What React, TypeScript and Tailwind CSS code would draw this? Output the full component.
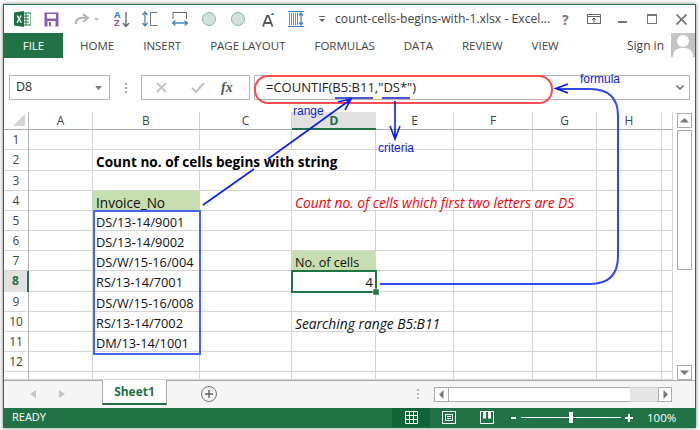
import React from 'react';

const sans = "font-['Open_Sans',sans-serif]";

type Cell = { col: number; span?: number; text: string; className?: string };

const columns = ['A', 'B', 'C', 'D', 'E', 'F', 'G', 'H', ''];

const rows: { n: string; cells: Cell[] }[] = [
  { n: '1', cells: [] },
  { n: '2', cells: [{ col: 1, span: 3, text: 'Count no. of cells begins with string', className: 'text-[13.6px] font-bold text-black' }] },
  { n: '3', cells: [] },
  {
    n: '4',
    cells: [
      { col: 1, text: 'Invoice_No', className: 'text-[13.6px] bg-[#c6deb0]' },
      { col: 3, span: 4, text: 'Count no. of cells which first two letters are DS', className: 'text-[13.7px] italic text-[#ff0000]' },
    ],
  },
  { n: '5', cells: [{ col: 1, text: 'DS/13-14/9001', className: 'text-[12.8px]' }] },
  { n: '6', cells: [{ col: 1, text: 'DS/13-14/9002', className: 'text-[12.8px]' }] },
  {
    n: '7',
    cells: [
      { col: 1, text: 'DS/W/15-16/004', className: 'text-[12.8px]' },
      { col: 3, text: 'No. of cells', className: 'text-[12.6px] bg-[#c6deb0]' },
    ],
  },
  {
    n: '8',
    cells: [
      { col: 1, text: 'RS/13-14/7001', className: 'text-[12.8px]' },
      { col: 3, text: '4', className: 'text-[13px] text-right' },
    ],
  },
  { n: '9', cells: [{ col: 1, text: 'DS/W/15-16/008', className: 'text-[12.8px]' }] },
  {
    n: '10',
    cells: [
      { col: 1, text: 'RS/13-14/7002', className: 'text-[12.8px]' },
      { col: 3, span: 2, text: 'Searching range B5:B11', className: 'text-[13.8px] italic' },
    ],
  },
  { n: '11', cells: [{ col: 1, text: 'DM/13-14/1001', className: 'text-[12.8px]' }] },
  { n: '12', cells: [] },
  { n: '', cells: [] },
];

function SheetGrid() {
  return (
    <div className="grid grid-cols-[25px_64px_107px_92px_84px_78px_79px_64px_65px_11px] grid-rows-[18px_20px_21px_20px_20px_20px_20px_20px_21px_20px_20px_20px_20px_8px] w-[669px] h-[268px] overflow-hidden bg-white">
      <div className="border-r border-b border-r-[#b5b5b5] border-b-[#ababab] flex items-end justify-end p-[3px]">
        <div className="w-[12px] h-[12px] bg-[#d4d4d4] [clip-path:polygon(100%_0,100%_100%,0_100%)]" />
      </div>
      {columns.map((c, i) => (
        <div
          key={i}
          className={
            c === 'D'
              ? `bg-[#e1e1e1] border-b-2 border-[#217346] text-center text-[12.5px] leading-[17px] font-bold text-[#217346] ${sans}`
              : `border-r border-b border-r-[#d4d4d4] border-b-[#ababab] text-center text-[12px] leading-[17px] text-[#444] ${sans}`
          }
        >
          {c}
        </div>
      ))}
      {rows.map((row) => {
        const taken = new Set<number>();
        row.cells.forEach((cell) => {
          for (let k = 0; k < (cell.span ?? 1); k++) taken.add(cell.col + k);
        });
        return (
          <React.Fragment key={row.n || 'last'}>
            <div
              className={
                row.n === '8'
                  ? `bg-[#e1e1e1] border-r-2 border-[#217346] text-center text-[12px] leading-[20px] font-bold text-[#217346] ${sans}`
                  : `border-r border-b border-r-[#b5b5b5] border-b-[#d4d4d4] text-center text-[12px] leading-[20px] text-[#444] ${sans}`
              }
            >
              {row.n}
            </div>
            {columns.map((_, i) => {
              const cell = row.cells.find((x) => x.col === i);
              if (cell) {
                return (
                  <div
                    key={i}
                    style={{ gridColumn: `span ${cell.span ?? 1}` }}
                    className={`border-r border-b border-[#d4d4d4] pt-[1px] pl-[3px] pr-[2px] leading-[21px] whitespace-nowrap text-[#111] ${sans} ${cell.className ?? ''}`}
                  >
                    {cell.text}
                  </div>
                );
              }
              if (taken.has(i)) return null;
              return <div key={i} className="border-r border-b border-[#d4d4d4]" />;
            })}
          </React.Fragment>
        );
      })}
    </div>
  );
}

function QuickAccess() {
  return (
    <div className="h-[28px] flex items-center pl-[10px]">
      <svg width="17" height="16" viewBox="0 0 17 16">
        <rect x="6" y="2" width="11" height="12" fill="#fff" stroke="#217346" />
        <path d="M9 5h6M9 8h6M9 11h6M12 2v12" stroke="#217346" strokeWidth="1" />
        <path d="M0 1.500 10 0v16L0 14.500z" fill="#1d6f42" />
        <path d="M2.500 4.500h1.700L5.200 7l1-2.500h1.600L6 8l1.900 3.700H6.200L5.100 9.100 4 11.700H2.400L4.300 8z" fill="#fff" />
      </svg>
      <svg width="15" height="15" viewBox="0 0 15 15" className="ml-[13px]">
        <rect x="0.500" y="0.500" width="14" height="14" fill="#8a5bb0" />
        <rect x="3" y="2" width="9" height="4.500" fill="#fff" />
        <rect x="3.500" y="9" width="8" height="5.500" fill="#fff" />
        <rect x="5" y="10" width="2" height="4" fill="#8a5bb0" />
      </svg>
      <svg width="15" height="13" viewBox="0 0 15 13" className="ml-[15px]">
        <path d="M2 11C1 6 6 4 12 5" fill="none" stroke="#b5b5b5" strokeWidth="2.200" />
        <path d="M9 1l5 4-5 4" fill="none" stroke="#b5b5b5" strokeWidth="2" />
      </svg>
      <svg width="5" height="3" viewBox="0 0 5 3" className="ml-[5px]">
        <path d="M0 0h5L2.500 3z" fill="#bdbdbd" />
      </svg>
      <div className="ml-[15px] w-[16px] h-[17px] flex">
        <div className={`w-[8px] flex flex-col text-[9.5px] leading-[8.500px] font-bold ${sans}`}>
          <span className="text-[#3f7fbf]">A</span>
          <span className="text-[#8a5bb0]">Z</span>
        </div>
        <svg width="8" height="17" viewBox="0 0 8 17">
          <path d="M4 1v14M1 12l3 3.500 3-3.500" fill="none" stroke="#666" strokeWidth="1.300" />
        </svg>
      </div>
      <svg width="16" height="16" viewBox="0 0 16 16" className="ml-[12px]">
        <path d="M3 1v14M0.500 4 3 1l2.500 3M0.500 12 3 15l2.500-3" fill="none" stroke="#4a86c0" strokeWidth="1.300" />
        <path d="M15.500 1.500H8.500v13h7" fill="none" stroke="#777" strokeWidth="1" />
      </svg>
      <svg width="16" height="16" viewBox="0 0 16 16" className="ml-[14px]">
        <path d="M1 8V1.500h13.500V8" fill="none" stroke="#666" strokeWidth="1" />
        <path d="M0.500 12h15M3.500 9.500 0.500 12l3 2.500M12.500 9.500l3 2.500-3 2.500" fill="none" stroke="#4a86c0" strokeWidth="1.300" />
      </svg>
      <div className="ml-[14px] w-[14px] h-[14px] rounded-full bg-[#cfe2da] border border-[#8fb3a6]" />
      <div className="ml-[15px] w-[14px] h-[14px] rounded-full bg-[#cfe2da] border border-[#8fb3a6]" />
      <svg width="13" height="15" viewBox="0 0 13 15" className="ml-[17px]">
        <path d="M1 14.500 5 4h1.500l4 10.500M2.500 11h6.500" fill="none" stroke="#555" strokeWidth="1.800" />
        <path d="M8.500 3 10.500 0.500 12.500 3z" fill="#3f7fbf" />
      </svg>
      <svg width="16" height="16" viewBox="0 0 16 16" className="ml-[13px]">
        <path d="M0 0.500h16M0 15.500h16" stroke="#4a86c0" strokeWidth="1" />
        <path d="M1.500 2v12M3.500 2v12M5.500 2v12M7.500 2v12M9.500 2v12" stroke="#888" strokeWidth="1" />
        <path d="M13 2v12M11 4.500 13 2l2 2.500M11 11.500 13 14l2-2.500" fill="none" stroke="#4a86c0" strokeWidth="1.300" />
      </svg>
      <svg width="6" height="6" viewBox="0 0 6 6" className="ml-[15px]">
        <path d="M0 0.500h6" stroke="#666" />
        <path d="M0 3h6L3 6z" fill="#666" />
      </svg>
      <span className={`ml-[10px] w-[212px] text-[12.2px] text-[#444] whitespace-nowrap ${sans}`}>
        count-cells-begins-with-1.xlsx - Excel...
      </span>
      <span className={`ml-[15px] w-[14px] text-[14px] font-bold text-[#777] ${sans}`}>?</span>
      <svg width="14" height="10" viewBox="0 0 14 10" className="ml-[11px]">
        <rect x="0.500" y="0.500" width="13" height="9" fill="none" stroke="#666" />
        <path d="M0 2.500h14" stroke="#666" />
        <path d="M7 8.500V4.500M5 6l2-2 2 2" fill="none" stroke="#555" />
      </svg>
      <div className="ml-[17px] w-[9px] h-[2px] mt-[6px] bg-[#777]" />
      <div className="ml-[20px] w-[10px] h-[10px] border border-t-2 border-[#777]" />
      <svg width="11" height="11" viewBox="0 0 11 11" className="ml-[19px]">
        <path d="M0.500 0.500l10 10M10.500 0.500l-10 10" stroke="#777" strokeWidth="1.800" />
      </svg>
    </div>
  );
}

function RibbonTabs() {
  const tabs = [
    ['HOME', 'ml-[17px]'],
    ['INSERT', 'ml-[29px]'],
    ['PAGE LAYOUT', 'ml-[29px]'],
    ['FORMULAS', 'ml-[29px]'],
    ['DATA', 'ml-[29px]'],
    ['REVIEW', 'ml-[29px]'],
    ['VIEW', 'ml-[29px]'],
  ];
  return (
    <div className={`h-[25px] flex items-center text-[11.5px] text-[#444] ${sans}`}>
      <div className="w-[59px] h-[25px] bg-[#217346] text-white flex items-center justify-center">FILE</div>
      {tabs.map(([t, ml]) => (
        <span key={t} className={ml}>
          {t}
        </span>
      ))}
      <span className="ml-auto text-[12px]">Sign in</span>
      <div className="ml-[7px] w-[24px] h-[24px] bg-[#c4c4c4] overflow-hidden self-start">
        <svg width="24" height="24" viewBox="0 0 24 24">
          <circle cx="12" cy="8" r="6" fill="#fff" />
          <path d="M2 24c0-7 4-9 10-9s10 2 10 9z" fill="#fff" />
        </svg>
      </div>
    </div>
  );
}

function FormulaBar() {
  return (
    <div className={`h-[25px] mt-[17px] flex text-[#333] ${sans}`}>
      <div className="ml-[5px] w-[101px] border border-[#b5b5b5] flex items-center pl-[6px] pr-[7px] text-[12.5px]">
        D8
        <svg width="7" height="4" viewBox="0 0 7 4" className="ml-auto">
          <path d="M0 0h7L3.500 4z" fill="#777" />
        </svg>
      </div>
      <div className="w-[31px] flex flex-col items-center justify-center gap-[2px]">
        <div className="w-[2px] h-[2px] bg-[#aaa]" />
        <div className="w-[2px] h-[2px] bg-[#aaa]" />
        <div className="w-[2px] h-[2px] bg-[#aaa]" />
      </div>
      <div className="w-[109px] border border-[#b5b5b5] flex items-center pl-[14px]">
        <svg width="11" height="11" viewBox="0 0 11 11">
          <path d="M1 1l9 9M10 1l-9 9" stroke="#c4c4c4" strokeWidth="1.800" />
        </svg>
        <svg width="14" height="11" viewBox="0 0 14 11" className="ml-[24px]">
          <path d="M1 6l4 4 8-9" fill="none" stroke="#c4c4c4" strokeWidth="2.200" />
        </svg>
        <span className="ml-[16px] font-['Liberation_Serif',serif] italic font-bold text-[14px] text-[#555]">fx</span>
      </div>
      <div className="ml-[4px] w-[436px] border border-[#b5b5b5] flex items-center pl-[11px] pr-[5px] text-[13px] text-[#222]">
        =COUNTIF(B5:B11,"DS*")
        <svg width="8" height="5" viewBox="0 0 8 5" className="ml-auto">
          <path d="M0.500 0.500 4 4l3.500-3.500" fill="none" stroke="#777" strokeWidth="1.600" />
        </svg>
      </div>
    </div>
  );
}

function ScrollButton({ d, className }: { d: string; className: string }) {
  return (
    <div className={`bg-white border border-[#ababab] flex items-center justify-center ${className}`}>
      <svg width="9" height="9" viewBox="0 0 9 9">
        <path d={d} fill="#777" />
      </svg>
    </div>
  );
}

function VerticalScroll() {
  return (
    <div className="w-[22px] pl-[4px] pr-[3px] flex flex-col">
      <ScrollButton d="M0 6.500 4.500 2 9 6.500z" className="h-[15px] mt-[1px]" />
      <div className="h-[140px] mt-[2px] border border-[#ababab] bg-white" />
      <ScrollButton d="M0 2.500h9L4.500 7z" className="h-[15px] mt-auto" />
    </div>
  );
}

function TabBar() {
  return (
    <div className={`h-[28px] bg-[#f5f5f5] border-t border-[#ababab] flex items-start ${sans}`}>
      <svg width="6" height="8" viewBox="0 0 6 8" className="ml-[26px] mt-[9px]">
        <path d="M6 0v8L0 4z" fill="#c4c4c4" />
      </svg>
      <svg width="6" height="8" viewBox="0 0 6 8" className="ml-[23px] mt-[9px]">
        <path d="M0 0v8l6-4z" fill="#c4c4c4" />
      </svg>
      <div className="ml-[37px] w-[65px] h-[25px] -mt-[1px] bg-white border-x border-[#ababab] border-b-2 border-b-[#217346] text-center text-[12px] leading-[23px] font-bold text-[#217346]">
        Sheet1
      </div>
      <div className="ml-[34px] mt-[5px] w-[16px] h-[16px] rounded-full border border-[#777] flex items-center justify-center">
        <svg width="8" height="8" viewBox="0 0 8 8">
          <path d="M4 0v8M0 4h8" stroke="#666" strokeWidth="1.500" />
        </svg>
      </div>
      <div className="ml-[200px] mt-[8px] flex flex-col gap-[2px]">
        <div className="w-[2px] h-[2px] bg-[#bbb]" />
        <div className="w-[2px] h-[2px] bg-[#bbb]" />
        <div className="w-[2px] h-[2px] bg-[#bbb]" />
      </div>
      <div className="ml-[15px] mt-[6px] flex h-[15px] w-[238px]">
        <ScrollButton d="M6.500 0v9L2 4.500z" className="w-[15px]" />
        <div className="w-[181px] bg-white border-y border-[#ababab]" />
        <div className="w-[28px] bg-[#e6e6e6] border-y border-[#d4d4d4]" />
        <ScrollButton d="M2.500 0v9L7 4.500z" className="w-[14px]" />
      </div>
    </div>
  );
}

function StatusBar() {
  return (
    <div className={`h-[19px] bg-[#217346] flex items-center text-white text-[11px] ${sans}`}>
      <span className="ml-[8px]">READY</span>
      <div className="ml-auto w-[38px] h-[19px] bg-[#0f6537] flex items-center justify-center">
        <svg width="13" height="13" viewBox="0 0 13 13">
          <path d="M0.500 0.500h12v12h-12zM0.500 4.500h12M0.500 8.500h12M4.500 0.500v12M8.500 0.500v12" fill="none" stroke="#fff" />
        </svg>
      </div>
      <svg width="14" height="13" viewBox="0 0 14 13" className="ml-[12px]">
        <path d="M0.500 0.500h13v12H0.500zM3.500 3.500h7v6h-7zM5 5.500h4M5 7.500h4" fill="none" stroke="#fff" />
      </svg>
      <svg width="14" height="13" viewBox="0 0 14 13" className="ml-[24px]">
        <path d="M0.500 0.500h13v12H0.500z" fill="none" stroke="#fff" />
        <path d="M3 0.500h3v7H3zM8 0.500h3v7H8z" fill="#fff" />
      </svg>
      <div className="ml-[17px] w-[5px] h-[2px] bg-white" />
      <div className="ml-[5px] relative w-[100px] h-[1px] bg-white">
        <div className="absolute left-[48px] -top-[5px] w-[4px] h-[11px] bg-white" />
      </div>
      <svg width="8" height="8" viewBox="0 0 8 8" className="ml-[4px]">
        <path d="M4 0v8M0 4h8" stroke="#fff" strokeWidth="2" />
      </svg>
      <span className="ml-[14px] mr-[20px] w-[28px] text-[11.5px]">100%</span>
    </div>
  );
}

function Annotations() {
  const blue = '#0a1cf5';
  return (
    <>
      <svg width="700" height="430" viewBox="0 0 700 430" className="absolute inset-0 pointer-events-none">
        <rect x="255" y="76" width="297" height="27" rx="13" fill="none" stroke="#ff4b50" strokeWidth="2" />
        <path d="M335 98h38M382 98h28" stroke="#1020c0" strokeWidth="1.500" />
        <rect x="94" y="211" width="106" height="143" fill="none" stroke="#4a63ee" strokeWidth="2" />
        <path d="M203 205 254 169M268 159 350 100M338 102 351 99 345 110" fill="none" stroke={blue} strokeWidth="1.600" />
        <path d="M395 101V138M390 126 395 139 400 126" fill="none" stroke={blue} strokeWidth="1.600" />
        <path d="M380 284H590Q618 284 618 256V116Q618 89 590 89H557" fill="none" stroke="#3048f5" strokeWidth="2" />
        <path d="M568 84 556 88.500 568 93" fill="none" stroke={blue} strokeWidth="1.800" />
        <rect x="292" y="271" width="84" height="21" fill="none" stroke="#217346" strokeWidth="2" />
        <rect x="373" y="289" width="6" height="6" fill="#217346" stroke="#fff" strokeWidth="0.500" />
      </svg>
      <span className="absolute left-[293px] top-[104px] font-['Liberation_Sans',sans-serif] text-[12px] leading-[14px] text-[#1020e0]">range</span>
      <span className="absolute left-[378px] top-[141px] font-['Liberation_Sans',sans-serif] text-[12px] leading-[14px] text-[#1020e0]">criteria</span>
      <span className="absolute left-[580px] top-[72px] font-['Liberation_Sans',sans-serif] text-[12px] leading-[14px] text-[#1020e0]">formula</span>
    </>
  );
}

export default function App() {
  return (
    <div className="relative w-[700px] h-[430px] bg-white overflow-hidden">
      <div className="ml-[3px] mt-[4px] w-[693px] h-[424px] border border-[#217346] bg-white shadow-[0_0_4px_rgba(0,0,0,0.5)] flex flex-col">
        <QuickAccess />
        <RibbonTabs />
        <FormulaBar />
        <div className="flex mt-[12px]">
          <SheetGrid />
          <VerticalScroll />
        </div>
        <TabBar />
        <StatusBar />
      </div>
      <Annotations />
    </div>
  );
}
